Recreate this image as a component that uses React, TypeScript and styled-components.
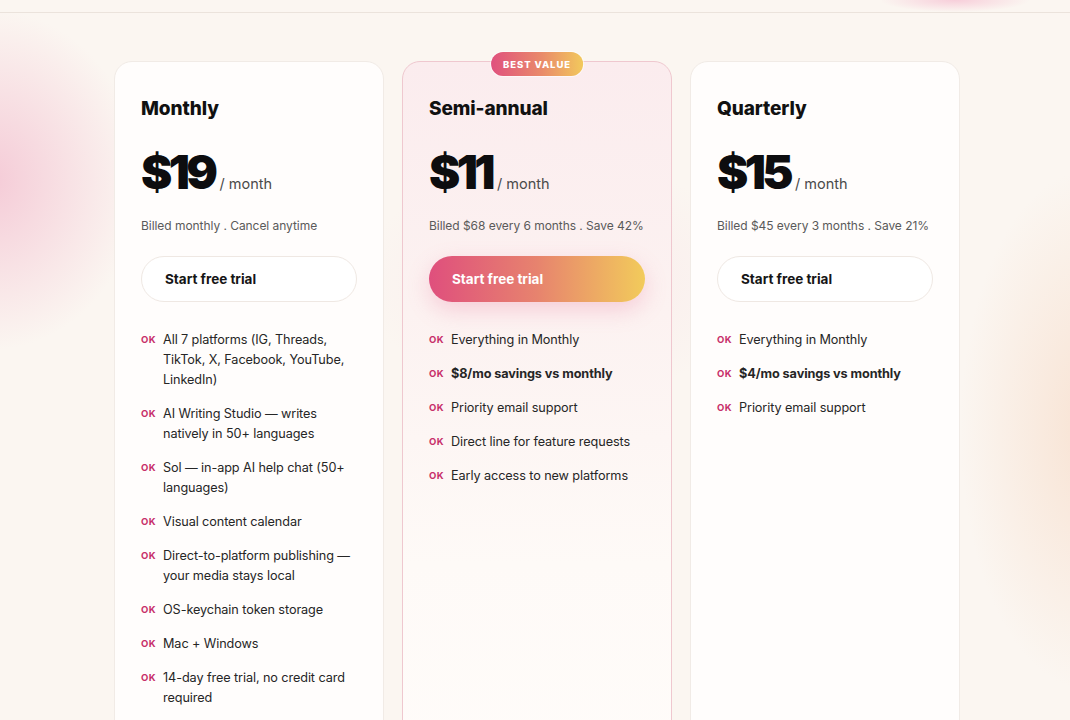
import React from "react";
import styled, { createGlobalStyle, css } from "styled-components";

const Global = createGlobalStyle`
  * { box-sizing: border-box; }
  html, body { margin: 0; padding: 0; }
  body {
    font-family: Inter, "Liberation Sans", sans-serif;
    background: #fbf6f1;
    color: #151515;
    -webkit-font-smoothing: antialiased;
  }
`;

const Page = styled.div`
  min-height: 720px;
  height: 720px;
  overflow: hidden;
  background:
    radial-gradient(ellipse 75px 12px at 955px 0px, rgba(246, 196, 212, 0.8), rgba(246, 196, 212, 0) 100%),
    radial-gradient(ellipse 150px 170px at -10px 180px, rgba(244, 198, 212, 0.9), rgba(244, 198, 212, 0) 100%),
    radial-gradient(ellipse 130px 260px at 1090px 430px, rgba(247, 222, 204, 0.8), rgba(247, 222, 204, 0) 100%),
    radial-gradient(ellipse 200px 120px at 560px 280px, rgba(248, 220, 228, 0.45), rgba(248, 220, 228, 0) 100%),
    #fbf6f1;
`;

const TopBar = styled.div`
  height: 13px;
  border-bottom: 1px solid #ebe3dc;
`;

const Grid = styled.section`
  display: grid;
  grid-template-columns: repeat(3, 270px);
  gap: 18px;
  padding: 48px 0 0 114px;
`;

const Card = styled.div<{ $featured?: boolean }>`
  position: relative;
  border-radius: 18px;
  padding: 35px 26px 40px;
  min-height: 720px;
  background: #fffdfc;
  border: 1px solid #f1ebe6;
  ${(p) =>
    p.$featured &&
    css`
      border-color: #efc8cf;
      background: linear-gradient(180deg, #fbecee 0%, #fcf2f1 35%, #fefaf7 70%, #fffcfa 100%);
    `}
`;

const Badge = styled.div`
  position: absolute;
  top: -10px;
  left: 50%;
  transform: translateX(-50%);
  height: 24px;
  padding: 0 12px;
  border-radius: 12px;
  display: flex;
  align-items: center;
  background: linear-gradient(90deg, #e0517e 0%, #e98a6a 55%, #f2c95c 100%);
  color: #fff;
  font-size: 9.5px;
  font-weight: 800;
  letter-spacing: 0.9px;
  white-space: nowrap;
  box-shadow: 0 0 0 1px rgba(255, 255, 255, 0.6);
`;

const Title = styled.h3`
  margin: 0;
  font-size: 19px;
  line-height: 24px;
  font-weight: 800;
  letter-spacing: -0.1px;
  color: #111;
`;

const PriceRow = styled.div`
  display: flex;
  align-items: baseline;
  gap: 5px;
  margin-top: 27px;
`;

const Amount = styled.span`
  font-size: 47px;
  line-height: 48px;
  font-weight: 900;
  letter-spacing: -3.6px;
  color: #0d0d0f;
`;

const Per = styled.span`
  font-size: 14.5px;
  color: #4a4a4a;
`;

const Billing = styled.p`
  margin: 21px 0 0;
  font-size: 12px;
  line-height: 18px;
  letter-spacing: -0.05px;
  color: #5a5a5a;
  white-space: nowrap;
`;

const Button = styled.button<{ $primary?: boolean }>`
  display: flex;
  align-items: center;
  width: 100%;
  height: 46px;
  margin-top: 21px;
  padding: 0 23px;
  border-radius: 23px;
  font-family: inherit;
  font-size: 13.5px;
  font-weight: 700;
  color: #151515;
  background: #fff;
  border: 1px solid #efe8e3;
  cursor: pointer;
  ${(p) =>
    p.$primary &&
    css`
      color: #fff;
      border: none;
      background: linear-gradient(90deg, #df4f7d 0%, #e7836e 50%, #f2cb5b 100%);
      box-shadow: 0 8px 22px rgba(232, 110, 150, 0.28);
    `}
`;

const Features = styled.ul`
  list-style: none;
  margin: 28px 0 0;
  padding: 0;
  display: flex;
  flex-direction: column;
  gap: 14px;
`;

const Feature = styled.li<{ $strong?: boolean }>`
  display: flex;
  align-items: flex-start;
  font-size: 12.7px;
  line-height: 20px;
  letter-spacing: -0.1px;
  color: #262626;
  font-weight: ${(p) => (p.$strong ? 700 : 400)};
`;

const Ok = styled.span`
  flex: 0 0 22px;
  font-size: 9.5px;
  font-weight: 700;
  letter-spacing: 0.4px;
  color: #c72e69;
  line-height: 20px;
`;

type Plan = {
  name: string;
  price: string;
  billing: string;
  featured?: boolean;
  features: { text: string; strong?: boolean }[];
};

const plans: Plan[] = [
  {
    name: "Monthly",
    price: "$19",
    billing: "Billed monthly . Cancel anytime",
    features: [
      { text: "All 7 platforms (IG, Threads, TikTok, X, Facebook, YouTube, LinkedIn)" },
      { text: "AI Writing Studio — writes natively in 50+ languages" },
      { text: "Sol — in-app AI help chat (50+ languages)" },
      { text: "Visual content calendar" },
      { text: "Direct-to-platform publishing — your media stays local" },
      { text: "OS-keychain token storage" },
      { text: "Mac + Windows" },
      { text: "14-day free trial, no credit card required" },
    ],
  },
  {
    name: "Semi-annual",
    price: "$11",
    billing: "Billed $68 every 6 months . Save 42%",
    featured: true,
    features: [
      { text: "Everything in Monthly" },
      { text: "$8/mo savings vs monthly", strong: true },
      { text: "Priority email support" },
      { text: "Direct line for feature requests" },
      { text: "Early access to new platforms" },
    ],
  },
  {
    name: "Quarterly",
    price: "$15",
    billing: "Billed $45 every 3 months . Save 21%",
    features: [
      { text: "Everything in Monthly" },
      { text: "$4/mo savings vs monthly", strong: true },
      { text: "Priority email support" },
    ],
  },
];

export default function App() {
  return (
    <>
      <Global />
      <Page>
        <TopBar />
        <Grid>
          {plans.map((p) => (
            <Card key={p.name} $featured={p.featured}>
              {p.featured && <Badge>BEST VALUE</Badge>}
              <Title>{p.name}</Title>
              <PriceRow>
                <Amount>{p.price}</Amount>
                <Per>/ month</Per>
              </PriceRow>
              <Billing>{p.billing}</Billing>
              <Button $primary={p.featured}>Start free trial</Button>
              <Features>
                {p.features.map((f) => (
                  <Feature key={f.text} $strong={f.strong}>
                    <Ok>OK</Ok>
                    <span>{f.text}</span>
                  </Feature>
                ))}
              </Features>
            </Card>
          ))}
        </Grid>
      </Page>
    </>
  );
}
